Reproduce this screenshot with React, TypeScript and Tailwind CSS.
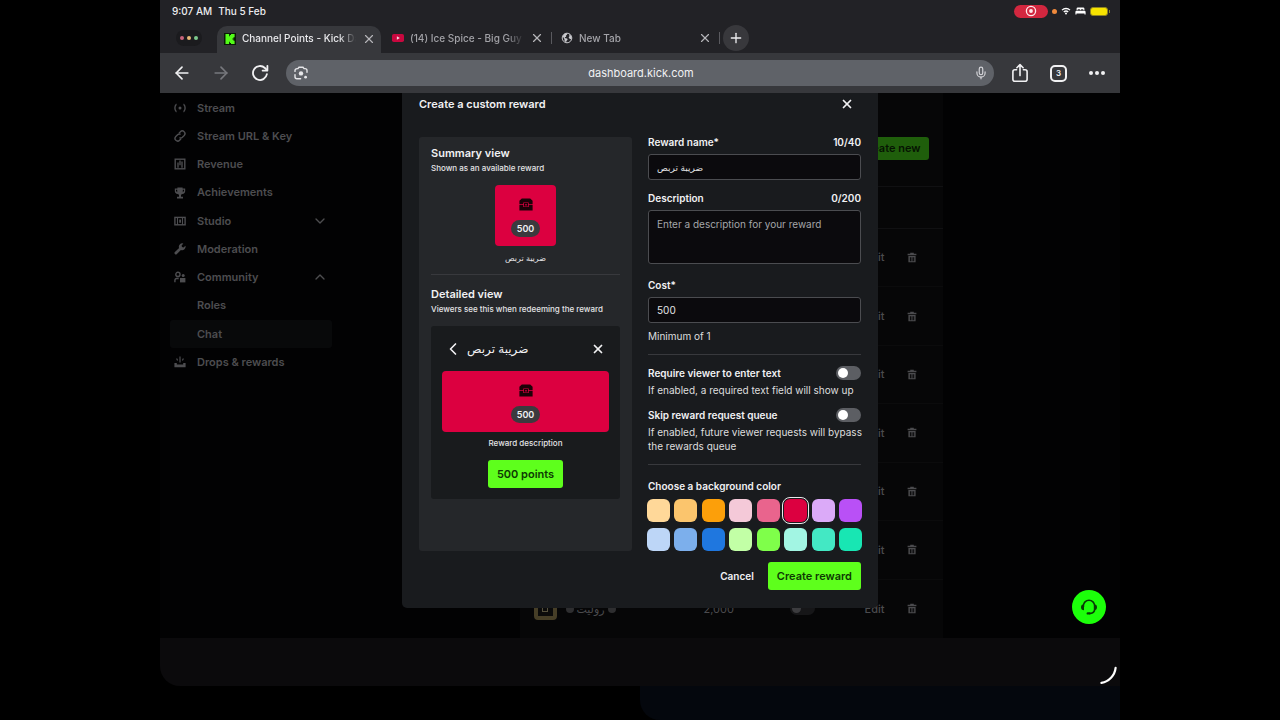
import { useState, type ReactNode } from "react";
import {
  ArrowLeft,
  ArrowRight,
  ChevronDown,
  ChevronLeft,
  ChevronUp,
  Mic,
  Plus,
  X,
} from "lucide-react";

const REWARD_NAME = "ضريبة تربص";

const SWATCHES = [
  { name: "Peach", color: "bg-[#ffd899]" },
  { name: "Apricot", color: "bg-[#fbc56d]" },
  { name: "Orange", color: "bg-[#fc9f0a]" },
  { name: "Blush", color: "bg-[#f4c9d8]" },
  { name: "Pink", color: "bg-[#e9648d]" },
  { name: "Crimson", color: "bg-[#dc0040]" },
  { name: "Lilac", color: "bg-[#dbaaf8]" },
  { name: "Purple", color: "bg-[#b950f6]" },
  { name: "Ice", color: "bg-[#bdd6f7]" },
  { name: "Sky", color: "bg-[#7cafec]" },
  { name: "Blue", color: "bg-[#1f77df]" },
  { name: "Mint", color: "bg-[#c2ffa6]" },
  { name: "Green", color: "bg-[#7fff4a]" },
  { name: "Aqua", color: "bg-[#a2f5e3]" },
  { name: "Turquoise", color: "bg-[#43e8c4]" },
  { name: "Teal", color: "bg-[#18e6b3]" },
];

/* ---------- icons ---------- */

function KickLogo() {
  return (
    <svg viewBox="0 0 12 12" className="size-3 shrink-0" aria-hidden="true">
      <rect width="12" height="12" fill="#0b1a08" />
      <path
        fill="#53fc18"
        d="M1.5 1h3.6v2.2h.8V2.1h1.1V1h3.6v3.3H9.5v1.1H8.4v1.2h1.1v1.1h1.1V11H7V9.9H5.9V8.8h-.8V11H1.5z"
      />
    </svg>
  );
}

function YoutubeLogo() {
  return (
    <svg viewBox="0 0 12 12" className="size-3 shrink-0" aria-hidden="true">
      <rect y="2" width="12" height="8" rx="1.8" fill="#c8083f" />
      <path fill="#f3d5df" d="M4.9 4.3 7.8 6 4.9 7.7z" />
    </svg>
  );
}

function GlobeIcon() {
  return (
    <svg viewBox="0 0 12 12" className="size-3 shrink-0" aria-hidden="true">
      <circle cx="6" cy="6" r="4.8" fill="#242428" stroke="#c9c9cd" strokeWidth="1" />
      <path
        fill="#c9c9cd"
        d="M1.6 4.2 3.2 2l2.4-.8.6 1.2-1.3 1.3.3 1.1-1.6.5.9 1 1.6.2.5 1.2-1.2 1.2-.2 1.6-1.6-1.6-.2-1.9zM8 2l1.8 1.5.8 2.2-.5 1.5-1.3-.3-1.2-1.6.9-1.1z"
      />
    </svg>
  );
}

function ReloadIcon() {
  return (
    <svg viewBox="0 0 20 20" className="size-5" fill="none" stroke="#f1f1f3" strokeWidth="1.8" strokeLinecap="round" aria-hidden="true">
      <path d="M16.9 11.2a7 7 0 1 1-2-6.2l2.2 2.2" />
      <path d="M17.4 2.8v4.8h-4.8" strokeLinejoin="round" />
    </svg>
  );
}

function LensIcon() {
  return (
    <svg viewBox="0 0 14 14" className="size-3.5 shrink-0" fill="none" stroke="#e6e6e9" strokeWidth="1.4" strokeLinecap="round" aria-hidden="true">
      <path d="M1 5.4V4.6a2 2 0 0 1 2-2h.9L5 1.2h4l1.1 1.4h.9a2 2 0 0 1 2 2v1.6M1 8.6v2.2a2 2 0 0 0 2 2h3.6" />
      <circle cx="7" cy="7.4" r="2.2" fill="#e6e6e9" stroke="none" />
      <circle cx="11.6" cy="11.2" r="1.4" fill="#e6e6e9" stroke="none" />
    </svg>
  );
}

function ShareIcon() {
  return (
    <svg viewBox="0 0 20 20" className="size-5" fill="none" stroke="#f1f1f3" strokeWidth="1.6" strokeLinecap="round" strokeLinejoin="round" aria-hidden="true">
      <path d="M6.6 6.8H4.9a2 2 0 0 0-2 2v7.4a2 2 0 0 0 2 2h10.2a2 2 0 0 0 2-2V8.8a2 2 0 0 0-2-2h-1.7" />
      <path d="M10 12.6V1.8M6.9 4.7 10 1.6l3.1 3.1" />
    </svg>
  );
}

function RecordIcon() {
  return (
    <svg viewBox="0 0 12 12" className="size-3" aria-hidden="true">
      <circle cx="6" cy="6" r="4.6" fill="none" stroke="#ffe9ec" strokeWidth="1.3" />
      <circle cx="6" cy="6" r="1.9" fill="#ffe9ec" />
    </svg>
  );
}

function WifiIcon() {
  return (
    <svg viewBox="0 0 10 8" className="h-2 w-2.5" aria-hidden="true" fill="none" stroke="#fff" strokeLinecap="butt">
      <path d="M1 3.1a5.8 5.8 0 0 1 8 0" strokeWidth="1.3" />
      <path d="M2.8 5a3.2 3.2 0 0 1 4.4 0" strokeWidth="1.3" />
      <circle cx="5" cy="6.6" r="1" fill="#fff" stroke="none" />
    </svg>
  );
}

function BedIcon() {
  return (
    <svg viewBox="0 0 11 8" className="h-2 w-[11px]" aria-hidden="true" fill="#fff">
      <path d="M1.6 3.2V1.6A1.2 1.2 0 0 1 2.8.5h5.4a1.2 1.2 0 0 1 1.2 1.1v1.6H8.6a1 1 0 0 0-1-.9h-.9a1 1 0 0 0-1 .9h-.4a1 1 0 0 0-1-.9h-.9a1 1 0 0 0-1 .9zM.4 7.6V4.9a1.2 1.2 0 0 1 1.2-1.2h7.8a1.2 1.2 0 0 1 1.2 1.2v2.7H9.5v-1h-8v1z" />
    </svg>
  );
}

function ChestIcon() {
  return (
    <svg viewBox="0 0 14 13" className="h-[13px] w-3.5" aria-hidden="true">
      <path
        fill="#1c0208"
        fillRule="evenodd"
        d="M2.8.4h8.4l2.4 2.3v3.5H9.7V4.4H4.3v1.8H.4V2.7zM.4 6.9h3.9v2.2h5.4V6.9h3.9v5.7H.4zM5 5.1h4v3.3H5zm1.3 1v1.3h1.4V6.1z"
      />
    </svg>
  );
}

function TrashIcon() {
  return (
    <svg viewBox="0 0 10 11" className="mx-auto h-[11px] w-2.5" aria-hidden="true">
      <path
        fill="#4b4b4e"
        fillRule="evenodd"
        d="M3.2.8h3.6v1h2.6v1.5H.6V1.8h2.6zM1.4 4.1h7.2v6.2H1.4zm1.5 1.1v4h1v-4zm1.7 0v4h.9v-4zm1.6 0v4h1v-4z"
      />
    </svg>
  );
}

function HeadsetIcon() {
  return (
    <svg viewBox="0 0 18 18" className="size-[18px]" fill="none" stroke="#083a05" aria-hidden="true">
      <path d="M3.4 9V7.8a5.6 5.6 0 0 1 11.2 0v3.4a4 4 0 0 1-4 4.2H9.2" strokeWidth="1.6" />
      <path d="M4 6.2v6A3 3 0 0 1 1 9.2a3 3 0 0 1 3-3zM14 6.2v6a3 3 0 0 0 3-3 3 3 0 0 0-3-3z" fill="#083a05" stroke="none" />
      <rect x="6.6" y="14.2" width="3.8" height="2.4" rx="1.2" fill="#083a05" stroke="none" />
    </svg>
  );
}

function NavIcon({ children }: { children: ReactNode }) {
  return (
    <svg viewBox="0 0 12 12" className="size-3 shrink-0" fill="none" stroke="#4d4d50" strokeWidth="1.4" aria-hidden="true">
      {children}
    </svg>
  );
}

const NAV_FILL = "#4d4d50";

const NAV: { label: string; icon?: ReactNode; chevron?: "up" | "down"; active?: boolean }[] = [
  {
    label: "Stream",
    icon: (
      <>
        <circle cx="6" cy="6" r="1.5" fill={NAV_FILL} stroke="none" />
        <path d="M2.6 2.4H2.2Q.9 3.6.9 6t1.3 3.6h.4M9.4 2.4h.4q1.3 1.2 1.3 3.6T9.8 9.6h-.4" />
      </>
    ),
  },
  {
    label: "Stream URL & Key",
    icon: (
      <>
        <path d="M5 3.2 6.4 1.8a2.6 2.6 0 0 1 3.8 3.6L8.4 7.2a2.6 2.6 0 0 1-3 .4" />
        <path d="M7 8.8 5.6 10.2A2.6 2.6 0 0 1 1.8 6.6l1.8-1.8a2.6 2.6 0 0 1 3-.4" />
      </>
    ),
  },
  {
    label: "Revenue",
    icon: (
      <>
        <rect x="1.2" y="1.2" width="9.6" height="9.6" />
        <path d="M4 9.8V4.4M6 7.2V2.6M8 9.8V3.6" />
      </>
    ),
  },
  {
    label: "Achievements",
    icon: (
      <path
        fill={NAV_FILL}
        stroke="none"
        d="M3.4.6h5.2v.8h2.6v2.6A3 3 0 0 1 8.4 6.9L7 7.7v2.1h2v1.6H3V9.8h2V7.7l-1.4-.8A3 3 0 0 1 .8 4V1.4h2.6zM2 2.7V4l1.2 1.3V2.7zm6.8 0v2.6L10 4V2.7z"
      />
    ),
  },
  {
    label: "Studio",
    chevron: "down",
    icon: (
      <>
        <rect x=".9" y="2.4" width="10.2" height="7.4" />
        <path d="M3.5 2.4v7.4M8.5 2.4v7.4" strokeWidth="1.1" />
        <path d="M5.2 4.4h1.8v3.4H5.2z" fill={NAV_FILL} stroke="none" />
      </>
    ),
  },
  {
    label: "Moderation",
    icon: (
      <path
        fill={NAV_FILL}
        stroke="none"
        d="M9.4.6 7.6 2.4l.4 1.7 1.6.4 1.8-1.8a3.4 3.4 0 0 1-4.5 4.2l-4 4.2a1.3 1.3 0 0 1-2-2l4.2-4A3.4 3.4 0 0 1 9.4.6z"
      />
    ),
  },
  {
    label: "Community",
    chevron: "up",
    icon: (
      <>
        <circle cx="3.9" cy="3.4" r="2.1" />
        <path d="M.9 11.2V9.4q0-1.9 1.8-1.9h2" />
        <circle cx="9.2" cy="4.4" r="1.5" fill={NAV_FILL} stroke="none" />
        <path d="M6 11.4V7h5.4v4.4z" fill={NAV_FILL} stroke="none" />
      </>
    ),
  },
  { label: "Roles" },
  { label: "Chat", active: true },
  {
    label: "Drops & rewards",
    icon: (
      <>
        <path d="M6 .6v6M2.6 2.4l1 2M9.4 2.4l-1 2" strokeWidth="1.2" />
        <path d="M.4 7h2.4v1.4h6.4V7h2.4v4.2H.4z" fill={NAV_FILL} stroke="none" />
      </>
    ),
  },
];

/* ---------- browser chrome ---------- */

function StatusBar() {
  return (
    <div className="flex h-[22px] items-center justify-between pr-2.5 pl-3 text-[10px] font-medium text-[#ededf0]">
      <div className="flex gap-1.5">
        <span>9:07 AM</span>
        <span>Thu 5 Feb</span>
      </div>
      <div className="flex items-center gap-1">
        <span className="flex h-[13px] w-[34px] items-center justify-center rounded-full bg-[#d2273f]">
          <RecordIcon />
        </span>
        <span className="size-[5px] rounded-full bg-[#f08a3c]" />
        <WifiIcon />
        <BedIcon />
        <span className="flex items-center gap-px">
          <span className="h-[9px] w-[18px] rounded-[3px] border border-[#8f8420] bg-[#f7e300]" />
          <span className="h-[3px] w-px bg-[#8f8420]" />
        </span>
      </div>
    </div>
  );
}

function Tab({
  icon,
  title,
  active,
  className,
}: {
  icon: ReactNode;
  title: string;
  active?: boolean;
  className: string;
}) {
  return (
    <div
      className={`flex h-[27px] items-center ${className} ${
        active ? "rounded-t-[10px] bg-[#37383c] pb-0.5 text-[#e9e9ec]" : "text-[#a3a3a8]"
      }`}
    >
      {icon}
      <a
        href="#tab"
        className="ml-1.5 min-w-0 flex-1 text-[10px] font-medium whitespace-nowrap [mask-image:linear-gradient(to_right,black_85%,transparent)]"
      >
        {title}
      </a>
      <button type="button" aria-label={`Close ${title}`} className="ml-1.5 text-[#b5b5b9]">
        <X className="size-3.5" strokeWidth={2} />
      </button>
    </div>
  );
}

function TabStrip() {
  return (
    <div className="flex h-[31px] items-end pl-4">
      <div className="mr-[15px] flex h-[31px] w-[26px] items-center justify-center">
        <span className="flex h-4 w-[26px] items-center justify-center gap-[3px] rounded-full bg-[#1b1b1e]">
          <span className="size-1 rounded-full bg-[#c9647c]" />
          <span className="size-1 rounded-full bg-[#e8b878]" />
          <span className="size-1 rounded-full bg-[#7cc98c]" />
        </span>
      </div>
      <Tab active icon={<KickLogo />} title="Channel Points - Kick Da" className="w-[164px] pr-[5px] pl-[7px]" />
      <div className="flex h-[31px] flex-1 items-center pt-px">
        <Tab icon={<YoutubeLogo />} title="(14) Ice Spice - Big Guy" className="w-[170px] pr-[7px] pl-[11px]" />
        <span className="h-3 w-px bg-[#5a5a5f]" />
        <Tab icon={<GlobeIcon />} title="New Tab" className="w-[167px] pr-[7px] pl-[9px]" />
        <span className="h-3 w-px bg-[#5a5a5f]" />
        <button type="button" aria-label="Open new tab" className="ml-[3px] flex size-[26px] items-center justify-center rounded-full bg-[#38383c] text-[#ededf0]">
          <Plus className="size-4" strokeWidth={2} />
        </button>
      </div>
    </div>
  );
}

function Toolbar() {
  return (
    <div className="flex h-10 items-center bg-[#37383c] pr-[15px] pl-3 text-[#f1f1f3]">
      <button type="button" aria-label="Back">
        <ArrowLeft className="size-5" strokeWidth={2} />
      </button>
      <button type="button" aria-label="Forward" className="ml-[19px] text-[#77787d]">
        <ArrowRight className="size-5" strokeWidth={2} />
      </button>
      <button type="button" aria-label="Reload" className="ml-[19px]">
        <ReloadIcon />
      </button>
      <div className="ml-4 flex h-[26px] flex-1 items-center rounded-full bg-[#5f6268] pr-1.5 pl-2">
        <LensIcon />
        <input
          aria-label="Address"
          defaultValue="dashboard.kick.com"
          className="min-w-0 flex-1 bg-transparent text-center text-[11px] text-[#f1f1f3] outline-none"
        />
        <Mic className="size-3.5 text-[#d6d6da]" strokeWidth={2} aria-hidden="true" />
      </div>
      <button type="button" aria-label="Share" className="ml-4">
        <ShareIcon />
      </button>
      <button type="button" className="ml-5 flex size-[17px] items-center justify-center rounded-[5px] border-2 border-[#f1f1f3] text-[8px] font-semibold">
        3
      </button>
      <button type="button" aria-label="More" className="ml-[22px] flex w-4 justify-between">
        <span className="size-1 rounded-full bg-[#f1f1f3]" />
        <span className="size-1 rounded-full bg-[#f1f1f3]" />
        <span className="size-1 rounded-full bg-[#f1f1f3]" />
      </button>
    </div>
  );
}

/* ---------- dashboard behind the dialog ---------- */

function Sidebar() {
  return (
    <nav className="flex h-[283px] w-[182px] shrink-0 flex-col justify-between pt-px pr-2.5 pl-2.5 text-[11px] font-semibold text-[#4d4d50]">
      {NAV.map((item) => (
        <a
          key={item.label}
          href="#nav"
          className={
            item.active
              ? "flex h-7 items-center rounded-[3px] bg-[#08090a] pr-1 pl-1"
              : "flex h-7 items-center pr-1 pl-1"
          }
        >
          {item.icon ? <NavIcon>{item.icon}</NavIcon> : <span className="w-3" />}
          <span className="ml-[11px] flex-1">{item.label}</span>
          {item.chevron === "down" && <ChevronDown className="size-4" strokeWidth={2} aria-hidden="true" />}
          {item.chevron === "up" && <ChevronUp className="size-4" strokeWidth={2} aria-hidden="true" />}
        </a>
      ))}
    </nav>
  );
}

function RewardsTable() {
  const rows = [0, 1, 2, 3, 4, 5, 6];
  return (
    <section className="flex w-[423px] flex-col bg-[#060607] pt-11 text-[11px] text-[#4b4b4e]">
      <div className="flex justify-end pr-3.5">
        <button type="button" className="h-[23px] rounded-[3px] bg-[#1f5e0b] px-2 font-semibold text-[#061402]">
          Create new
        </button>
      </div>
      <div className="mt-[26px] h-[43px] border-y border-[#101012]" />
      <table className="h-[409px] w-full table-fixed border-separate border-spacing-0">
        <colgroup>
          <col className="w-[46px]" />
          <col className="w-[138px]" />
          <col className="w-[86px]" />
          <col className="w-[60px]" />
          <col />
          <col className="w-[62px]" />
        </colgroup>
        <tbody>
          {rows.map((row) => {
            const last = row === rows.length - 1;
            const cell = last ? "p-0" : "border-b border-[#0b0b0c] p-0";
            return (
              <tr key={row} className="h-[58px]">
                <td className={cell}>
                  {last && (
                    <span className="ml-3.5 flex size-[23px] items-center justify-center rounded-[4px] border-4 border-[#463e27] bg-[#0b0b0b]">
                      <span className="size-1.5 border border-[#55503c]" />
                    </span>
                  )}
                </td>
                <td className={cell}>
                  {last && (
                    <span className="flex items-center gap-[3px]">
                      <span className="size-2 rounded-full bg-[#2e2e30]" />
                      <span dir="rtl" className="leading-4">
                        روليت
                      </span>
                      <span className="size-2 rounded-full bg-[#2e2e30]" />
                    </span>
                  )}
                </td>
                <td className={cell}>{last && "2,000"}</td>
                <td className={cell}>
                  {last && (
                    <span className="flex h-[13px] w-[25px] items-center rounded-full bg-[#161618] p-0.5">
                      <span className="size-[9px] rounded-full bg-[#3c3c3f]" />
                    </span>
                  )}
                </td>
                <td className={`${cell} text-right`}>
                  <button type="button" className="-mr-1 font-medium">
                    Edit
                  </button>
                </td>
                <td className={cell}>
                  <button type="button" aria-label="Delete" className="block w-full">
                    <TrashIcon />
                  </button>
                </td>
              </tr>
            );
          })}
        </tbody>
      </table>
    </section>
  );
}

/* ---------- dialog ---------- */

function CostPill({ value }: { value: string }) {
  return (
    <span className="flex h-[17px] items-center rounded-full bg-[#3b3a3e] px-[6px] text-[9px] font-semibold text-[#f1f1f3]">
      {value}
    </span>
  );
}

function Preview({ cost, name, color }: { cost: string; name: string; color: string }) {
  return (
    <section className="rounded-[3px] bg-[#25272a] px-3 pt-[9px] text-[8px] leading-3 font-medium text-[#e4e4e6]">
      <h3 className="text-[11px] leading-[14px] font-semibold text-[#f1f1f3]">Summary view</h3>
      <p className="mt-0.5">Shown as an available reward</p>
      <div className={`mx-auto mt-[11px] flex size-[61px] flex-col items-center gap-[9px] rounded-[4px] pt-[13px] ${color}`}>
        <ChestIcon />
        <CostPill value={cost} />
      </div>
      <p dir="rtl" className="mt-1.5 text-center font-normal">
        {name}
      </p>
      <hr className="mt-2.5 border-[#38393d]" />
      <h3 className="mt-3 text-[11px] leading-[14px] font-semibold text-[#f1f1f3]">Detailed view</h3>
      <p className="mt-0.5 whitespace-nowrap">Viewers see this when redeeming the reward</p>
      <div className="mt-[11px] flex flex-col items-center rounded-[3px] bg-[#191b1d] px-[11px] pb-[11px]">
        <div className="flex h-[45px] w-full items-center pl-px text-[#f1f1f3]">
          <button type="button" aria-label="Go back">
            <ChevronLeft className="size-5" strokeWidth={2} />
          </button>
          <span dir="rtl" className="ml-1 text-[12px] leading-4">
            {name}
          </span>
          <button type="button" aria-label="Close preview" className="mr-1 ml-auto">
            <X className="size-[14px]" strokeWidth={3} />
          </button>
        </div>
        <div className={`flex h-[61px] w-full flex-col items-center gap-[9px] rounded-[4px] pt-[13px] ${color}`}>
          <ChestIcon />
          <CostPill value={cost} />
        </div>
        <p className="mt-[5px]">Reward description</p>
        <button type="button" className="mt-[11px] h-7 rounded-[3px] bg-[#5eff1c] px-[9px] text-[11px] font-semibold text-[#0d3a03]">
          {cost} points
        </button>
      </div>
    </section>
  );
}

function Toggle({ id }: { id: string }) {
  return (
    <input
      id={id}
      type="checkbox"
      role="switch"
      className="flex h-[14px] w-[25px] appearance-none items-center rounded-full bg-[#5c5e63] px-0.5 before:size-2.5 before:rounded-full before:bg-white checked:justify-end checked:bg-[#5eff1c]"
    />
  );
}

const FIELD =
  "mt-[7px] block w-full rounded-[3px] border border-[#4b4c50] bg-[#0b0a0d] px-2 text-[#e4e4e6] outline-none placeholder:text-[#a5a6a9]";

function Swatch({
  name,
  color,
  selected,
  onClick,
}: {
  name: string;
  color: string;
  selected: boolean;
  onClick: () => void;
}) {
  return (
    <button
      type="button"
      aria-label={name}
      aria-pressed={selected}
      onClick={onClick}
      className={`size-[23px] rounded-[6px] ${color} ${selected ? "outline-1 outline-offset-1 outline-[#e9e9ec]" : ""}`}
    />
  );
}

function RewardDialog() {
  const [selected, setSelected] = useState(5);
  const [cost, setCost] = useState("500");
  const [name, setName] = useState(REWARD_NAME);
  const [description, setDescription] = useState("");

  return (
    <div role="dialog" aria-labelledby="dialog-title" className="w-[476px] rounded-b-[5px] bg-[#191b1e] px-[17px] pb-[18px] text-[#f1f1f3]">
      <div className="flex h-11 items-start justify-between pt-1">
        <h2 id="dialog-title" className="text-[11px] leading-[14px] font-semibold">
          Create a custom reward
        </h2>
        <button type="button" aria-label="Close" className="mr-[7px]">
          <X className="size-[14px]" strokeWidth={3} />
        </button>
      </div>
      <div className="grid grid-cols-2 gap-4">
        <Preview cost={cost} name={name} color={SWATCHES[selected].color} />
        <form className="text-[10px] leading-[14px]">
          <div className="flex justify-between leading-[10px] font-semibold">
            <label htmlFor="reward-name">Reward name*</label>
            <span>{name.length}/40</span>
          </div>
          <input
            id="reward-name"
            value={name}
            onChange={(e) => setName(e.target.value)}
            className={`${FIELD} h-[26px] text-[9px]`}
          />

          <div className="mt-[13px] flex justify-between leading-[10px] font-semibold">
            <label htmlFor="reward-description">Description</label>
            <span>{description.length}/200</span>
          </div>
          <textarea
            id="reward-description"
            value={description}
            onChange={(e) => setDescription(e.target.value)}
            placeholder="Enter a description for your reward"
            className={`${FIELD} h-[54px] resize-none py-1.5 text-[10px]`}
          />

          <label htmlFor="reward-cost" className="mt-4 block leading-[10px] font-semibold">
            Cost*
          </label>
          <input
            id="reward-cost"
            value={cost}
            onChange={(e) => setCost(e.target.value)}
            className={`${FIELD} h-[26px] text-[10px]`}
          />
          <p className="mt-1.5 text-[#dededf]">Minimum of 1</p>

          <hr className="mt-[11px] border-[#38393d]" />

          <div className="mt-[11px] flex items-center justify-between">
            <label htmlFor="require-text" className="font-semibold">
              Require viewer to enter text
            </label>
            <Toggle id="require-text" />
          </div>
          <p className="mt-[3px] text-[#dededf]">If enabled, a required text field will show up</p>
          <div className="mt-[11px] flex items-center justify-between">
            <label htmlFor="skip-queue" className="font-semibold">
              Skip reward request queue
            </label>
            <Toggle id="skip-queue" />
          </div>
          <p className="-mr-2 mt-[3px] text-[#dededf]">If enabled, future viewer requests will bypass the rewards queue</p>

          <hr className="mt-[11px] border-[#38393d]" />

          <h3 className="mt-3.5 font-semibold">Choose a background color</h3>
          <div className="-mx-px mt-1.5 grid gap-1.5">
            <div className="flex justify-between">
              {SWATCHES.slice(0, 8).map((s, i) => (
                <Swatch key={s.name} {...s} selected={selected === i} onClick={() => setSelected(i)} />
              ))}
            </div>
            <div className="flex justify-between">
              {SWATCHES.slice(8).map((s, i) => (
                <Swatch key={s.name} {...s} selected={selected === i + 8} onClick={() => setSelected(i + 8)} />
              ))}
            </div>
          </div>
        </form>
      </div>
      <div className="mt-[11px] flex items-center justify-end gap-3.5 font-semibold">
        <button type="button" className="text-[10px]">
          Cancel
        </button>
        <button type="button" className="h-7 rounded-[3px] bg-[#5eff1c] px-[9px] text-[11px] text-[#0d3a03]">
          Create reward
        </button>
      </div>
    </div>
  );
}

/* ---------- page ---------- */

export default function App() {
  return (
    <div className="flex min-h-screen justify-center bg-black font-[Inter,'DejaVu_Sans',sans-serif]">
      <div className="flex w-3/4 flex-col overflow-hidden">
        <header className="bg-[#222226]">
          <StatusBar />
          <TabStrip />
          <Toolbar />
        </header>

        <main className="relative h-[545px] overflow-hidden bg-[#020203]">
          <div className="flex">
            <Sidebar />
            <div className="flex flex-1 justify-center">
              <RewardsTable />
            </div>
          </div>
          <div className="absolute inset-0 flex items-start justify-center">
            <RewardDialog />
          </div>
          <button
            type="button"
            aria-label="Support"
            className="absolute right-3.5 bottom-3.5 flex size-[34px] items-center justify-center rounded-full bg-[#1cff0a]"
          >
            <HeadsetIcon />
          </button>
        </main>

        <div className="relative h-12 rounded-bl-[20px] bg-[#0b0a0c]">
          <svg viewBox="0 0 20 20" className="absolute right-0.5 bottom-0 size-5" fill="none" aria-hidden="true">
            <path d="M3.4 16.8A17 17 0 0 0 17.6 1.8" stroke="#fff" strokeWidth="2.2" strokeLinecap="round" />
          </svg>
        </div>
        <div className="flex flex-1 justify-end">
          <div className="w-1/2 rounded-bl-[20px] bg-[#04070d]" />
        </div>
      </div>
    </div>
  );
}
